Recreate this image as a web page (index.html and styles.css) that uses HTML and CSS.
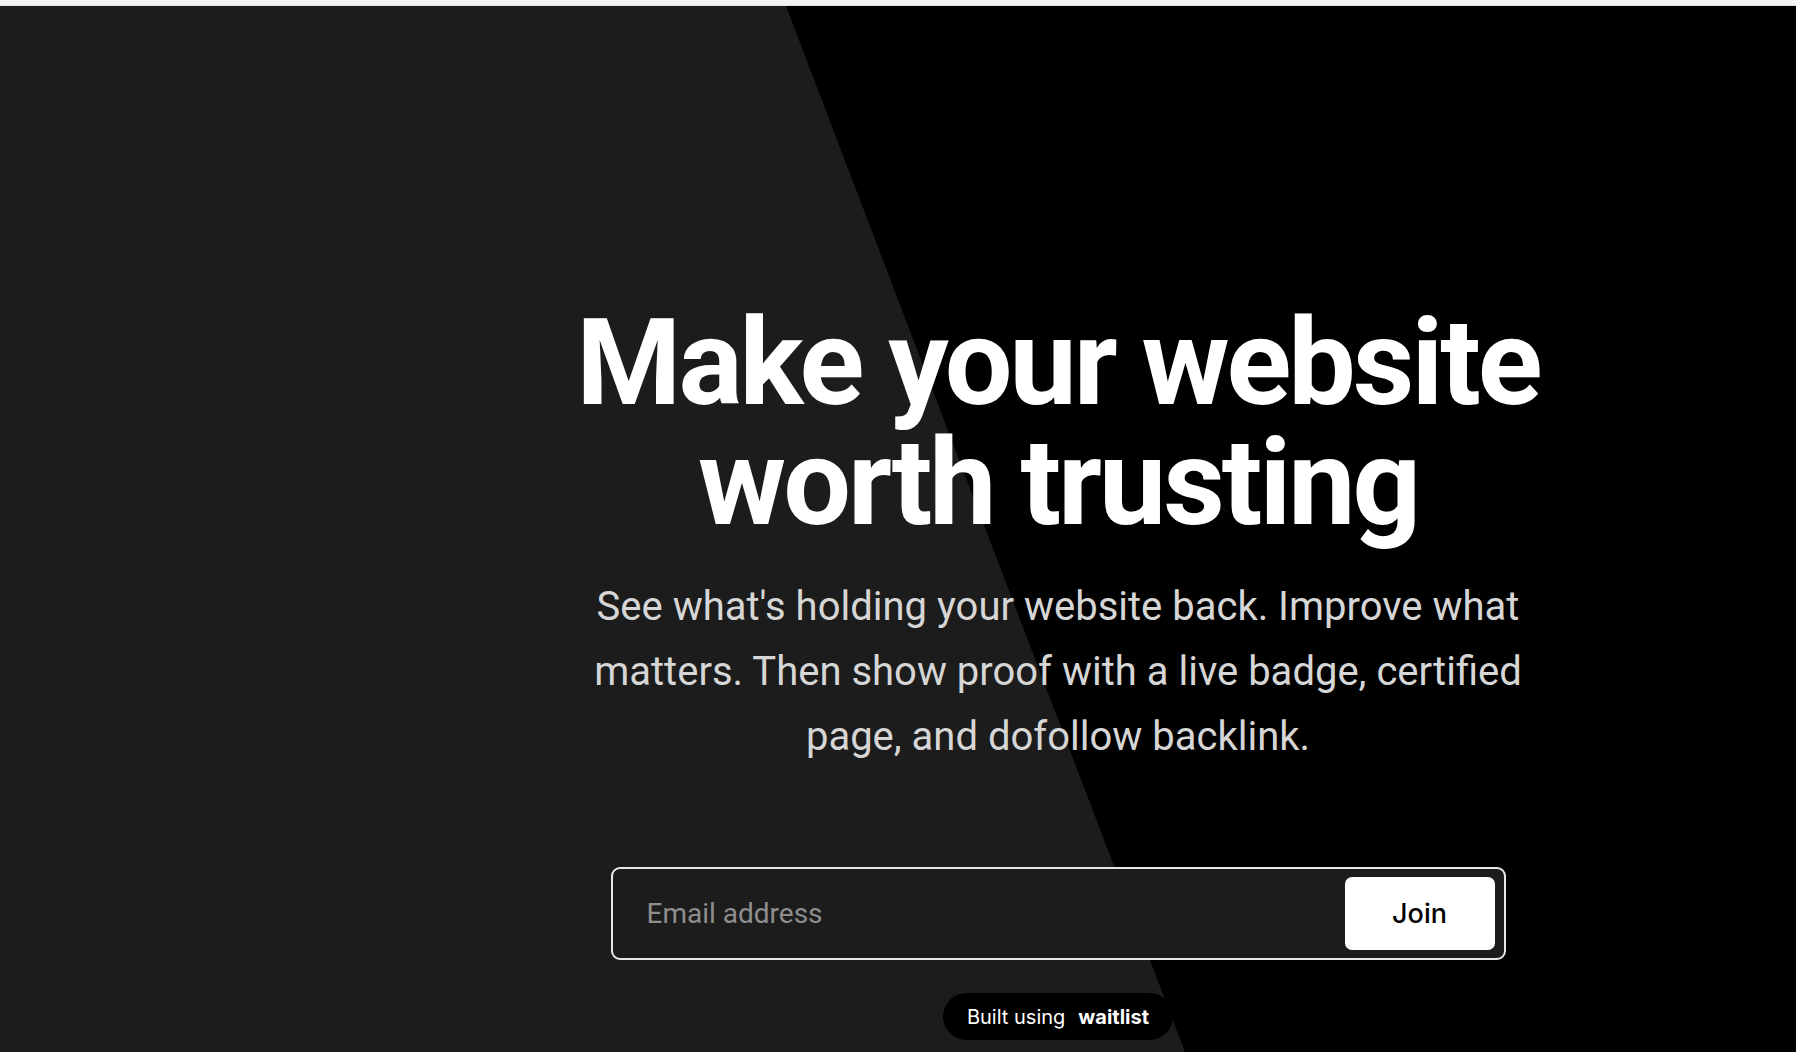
FILE: index.html
```html
<!DOCTYPE html>
<html lang="en">
<head>
	<meta charset="UTF-8">
	<title>Make your website worth trusting</title>
	<link rel="stylesheet" href="styles.css">
</head>
<body>
	<div class="topbar"></div>

	<div class="page">
		<div class="layout">
			<div class="spacer"></div>

			<main class="hero">
				<h1 class="hero-title">Make your website<br>worth trusting</h1>
				<p class="hero-text">See what's holding your website back. Improve what matters. Then show proof with a live badge, certified page, and dofollow backlink.</p>

				<form class="signup" onsubmit="return false;">
					<input class="signup-input" type="email" placeholder="Email address">
					<button class="signup-btn" type="submit">Join</button>
				</form>

				<a href="javascript:;" class="built">Built using <b>waitlist</b></a>
			</main>
		</div>
	</div>
</body>
</html>
```

FILE: styles.css
```css
*{
	padding: 0;
	margin: 0;
	box-sizing: border-box;
}

body{
	background-color: #000;
	font-family: Roboto, "Liberation Sans", sans-serif;
	color: #fff;
	overflow: hidden;
}

.topbar{
	height: 6px;
	background-color: #f2f2f2;
	border-bottom: 1px solid #e2e2e2;
}

.page{
	position: relative;
	height: calc(100vh - 6px);
	overflow: hidden;
}

/* the grey slanted panel behind the content */
.page::before{
	content: "";
	position: absolute;
	top: 0;
	left: 0;
	right: 0;
	bottom: 0;
	background-color: #1c1c1c;
	clip-path: polygon(0 0, 786px 0, 1185px 100%, 0 100%);
}

.layout{
	position: relative;
	z-index: 1;
	display: grid;
	grid-template-columns: 320px 1fr;
}

.hero{
	display: flex;
	flex-direction: column;
	align-items: center;
	padding-top: 297px;
	text-align: center;
}

.hero-title{
	font-size: 120px;
	line-height: 120px;
	font-weight: 700;
	letter-spacing: -3px;
}

.hero-text{
	width: 960px;
	margin-top: 31px;
	font-size: 40px;
	line-height: 65px;
	font-weight: 400;
	color: #d6d6d6;
}

.signup{
	display: flex;
	align-items: center;
	width: 895px;
	height: 93px;
	margin-top: 98px;
	padding: 9px;
	background-color: #1c1c1c;
	border: 2px solid #e8e8e8;
	border-radius: 9px;
}

.signup-input{
	flex: 1;
	height: 100%;
	padding-left: 25px;
	background: transparent;
	border: 0;
	outline: none;
	font-family: Roboto, sans-serif;
	font-size: 28px;
	color: #fff;
}
.signup-input::placeholder{
	color: #8e8e8e;
}

.signup-btn{
	width: 150px;
	height: 73px;
	background-color: #fff;
	border: 0;
	border-radius: 7px;
	font-family: Inter, "Liberation Sans", sans-serif;
	font-size: 27px;
	font-weight: 500;
	color: #000;
	cursor: pointer;
}

.built{
	display: inline-flex;
	align-items: center;
	gap: 13px;
	height: 47px;
	margin-top: 33px;
	padding: 0 24px;
	background-color: #000;
	border-radius: 24px;
	font-family: Inter, "Liberation Sans", sans-serif;
	font-size: 20px;
	color: #fff;
	text-decoration: none;
}
.built b{
	font-weight: 700;
}
```
